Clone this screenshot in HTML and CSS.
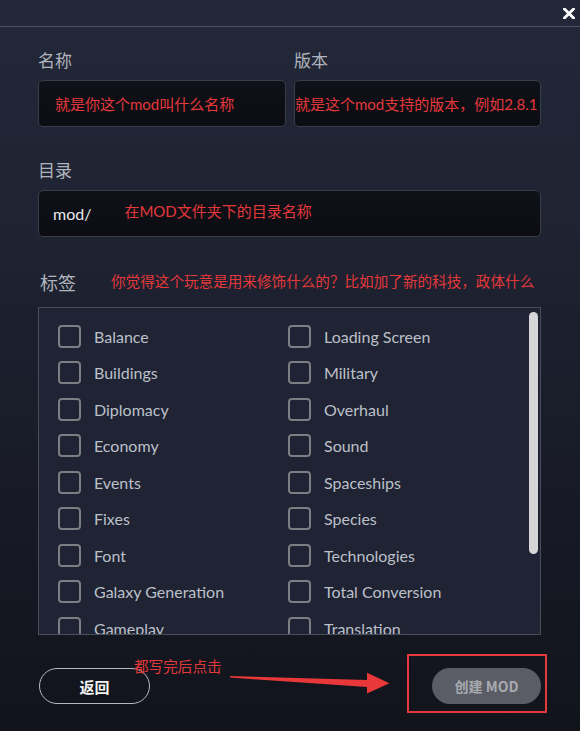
FILE: index.html
```html
<!DOCTYPE html>
<html lang="zh-CN">
<head>
<meta charset="utf-8">
<title>创建 MOD</title>
<link rel="stylesheet" href="styles.css">
</head>
<body>
<div class="window">
  <header class="titlebar">
    <button class="close" aria-label="关闭">
      <svg width="12" height="11" viewBox="0 0 12 11"><path d="M1.5 1 L10.5 10 M10.5 1 L1.5 10" stroke="#ffffff" stroke-width="2.8" stroke-linecap="square"/></svg>
    </button>
  </header>
  <main class="form">
    <div class="row-two">
      <div class="field">
        <div class="label">名称</div>
        <div class="input"><span class="note">就是你这个mod叫什么名称</span></div>
      </div>
      <div class="field">
        <div class="label">版本</div>
        <div class="input input-flush"><span class="note">就是这个mod支持的版本，例如2.8.1</span></div>
      </div>
    </div>
    <div class="field field-dir">
      <div class="label">目录</div>
      <div class="input"><span class="prefix">mod/</span><span class="note note-up">在MOD文件夹下的目录名称</span></div>
    </div>
    <div class="tags-head">
      <span class="label label-lg">标签</span>
      <span class="note note-sm">你觉得这个玩意是用来修饰什么的？比如加了新的科技，政体什么</span>
    </div>
    <div class="tags">
      <div class="tag-cols">
        <div class="tag-col">
          <div class="tag"><span class="box"></span><span>Balance</span></div>
          <div class="tag"><span class="box"></span><span>Buildings</span></div>
          <div class="tag"><span class="box"></span><span>Diplomacy</span></div>
          <div class="tag"><span class="box"></span><span>Economy</span></div>
          <div class="tag"><span class="box"></span><span>Events</span></div>
          <div class="tag"><span class="box"></span><span>Fixes</span></div>
          <div class="tag"><span class="box"></span><span>Font</span></div>
          <div class="tag"><span class="box"></span><span>Galaxy Generation</span></div>
          <div class="tag"><span class="box"></span><span>Gameplay</span></div>
          <div class="tag"><span class="box"></span><span>Graphics</span></div>
          <div class="tag"><span class="box"></span><span>Gui</span></div>
          <div class="tag"><span class="box"></span><span>Leaders</span></div>
        </div>
        <div class="tag-col">
          <div class="tag"><span class="box"></span><span>Loading Screen</span></div>
          <div class="tag"><span class="box"></span><span>Military</span></div>
          <div class="tag"><span class="box"></span><span>Overhaul</span></div>
          <div class="tag"><span class="box"></span><span>Sound</span></div>
          <div class="tag"><span class="box"></span><span>Spaceships</span></div>
          <div class="tag"><span class="box"></span><span>Species</span></div>
          <div class="tag"><span class="box"></span><span>Technologies</span></div>
          <div class="tag"><span class="box"></span><span>Total Conversion</span></div>
          <div class="tag"><span class="box"></span><span>Translation</span></div>
          <div class="tag"><span class="box"></span><span>Utilities</span></div>
        </div>
      </div>
      <div class="thumb"></div>
    </div>
    <footer class="actions">
      <button class="btn btn-back">返回</button>
      <button class="btn btn-create">创建 MOD</button>
      <span class="note note-click">都写完后点击</span>
      <svg class="arrow" width="162" height="26" viewBox="0 0 162 26">
        <polygon points="0,6 137,10 137,2.7 159.5,13.3 137,23.5 137,17 0,7.6" fill="#e8383a"/>
      </svg>
      <span class="highlight"></span>
    </footer>
  </main>
</div>
</body>
</html>
```

FILE: styles.css
```css
* { box-sizing: border-box; }

html, body {
  margin: 0;
  padding: 0;
}

body {
  width: 580px;
  height: 731px;
  overflow: hidden;
  background: linear-gradient(to bottom, #232839 0%, #1e2231 35%, #181b27 65%, #11141b 100%);
  font-family: "Noto Sans CJK SC", "Noto Sans", sans-serif;
  color: #b2b6be;
}

.window {
  width: 580px;
  height: 731px;
}

.titlebar {
  height: 27px;
  border-bottom: 1px solid #4d5365;
  display: flex;
  justify-content: flex-end;
  align-items: center;
  padding-right: 5px;
}

.close {
  background: none;
  border: 0;
  padding: 0;
  width: 12px;
  height: 11px;
  display: flex;
  cursor: pointer;
}

.form {
  padding: 23px 39px 0 38px;
}

.row-two {
  display: grid;
  grid-template-columns: 248px 247px;
  column-gap: 8px;
}

.label {
  font-size: 17px;
  line-height: 20px;
  color: #b0b4bc;
  margin-bottom: 10px;
}

.label-lg {
  font-size: 18px;
  line-height: 22px;
  margin-bottom: 0;
}

.input {
  height: 47px;
  border: 1px solid #393d48;
  border-radius: 5px;
  background: linear-gradient(to bottom, #0f1118, #0b0d13);
  display: flex;
  align-items: center;
  padding-left: 16px;
  white-space: nowrap;
}

.input-flush {
  padding-left: 0;
}

.note {
  font-family: Lato, "Noto Sans CJK SC", sans-serif;
  font-size: 15px;
  line-height: 18px;
  color: #e5383b;
}

.note-sm {
  font-size: 14.6px;
  margin-left: 35px;
}

.note-up {
  margin-left: 33px;
  margin-bottom: 6px;
}

.prefix {
  font-family: Lato, "Noto Sans", sans-serif;
  font-size: 16px;
  color: #e8e9ec;
  margin-left: -2px;
}

.field-dir {
  margin-top: 33px;
}

.tags-head {
  margin-top: 34px;
  display: flex;
  align-items: center;
  padding-left: 2px;
  height: 22px;
}

.tags {
  position: relative;
  margin-top: 14px;
  height: 328px;
  border: 1px solid #4a4e59;
  background: #1f2333;
  overflow: hidden;
}

.tag-cols {
  display: flex;
  padding: 10px 0 0 19px;
}

.tag-col {
  width: 230px;
  display: flex;
  flex-direction: column;
}

.tag {
  height: 36.5px;
  display: flex;
  align-items: center;
  gap: 13px;
  font-family: Lato, "Noto Sans", sans-serif;
  font-size: 16px;
  color: #bcc0c9;
  white-space: nowrap;
}

.box {
  width: 23px;
  height: 23px;
  flex: none;
  border: 2.5px solid #7c7e84;
  border-radius: 4px;
}

.thumb {
  position: absolute;
  left: 490px;
  top: 4px;
  width: 8.5px;
  height: 242px;
  border-radius: 4.5px;
  background: #d6d6d8;
}

.actions {
  position: relative;
  margin-top: 33px;
  display: flex;
  justify-content: space-between;
  align-items: center;
}

.btn {
  height: 36px;
  border-radius: 18px;
  font-family: "Noto Sans CJK SC", sans-serif;
  font-weight: 700;
  padding: 0;
  cursor: pointer;
}

.btn-back {
  width: 111px;
  margin-left: 1px;
  background: transparent;
  border: 1px solid #b9b9bd;
  color: #f2f2f2;
  font-size: 15px;
}

.btn-create {
  width: 109px;
  background: #5a5d65;
  border: 0;
  color: #a8aab0;
  font-size: 14px;
}

.note-click {
  position: absolute;
  left: 96px;
  top: -10px;
  font-size: 14.6px;
  line-height: 17px;
}

.arrow {
  position: absolute;
  left: 192px;
  top: 2px;
}

.highlight {
  position: absolute;
  left: 369px;
  top: -14px;
  width: 140px;
  height: 59px;
  border: 2px solid #e5393b;
}
```
